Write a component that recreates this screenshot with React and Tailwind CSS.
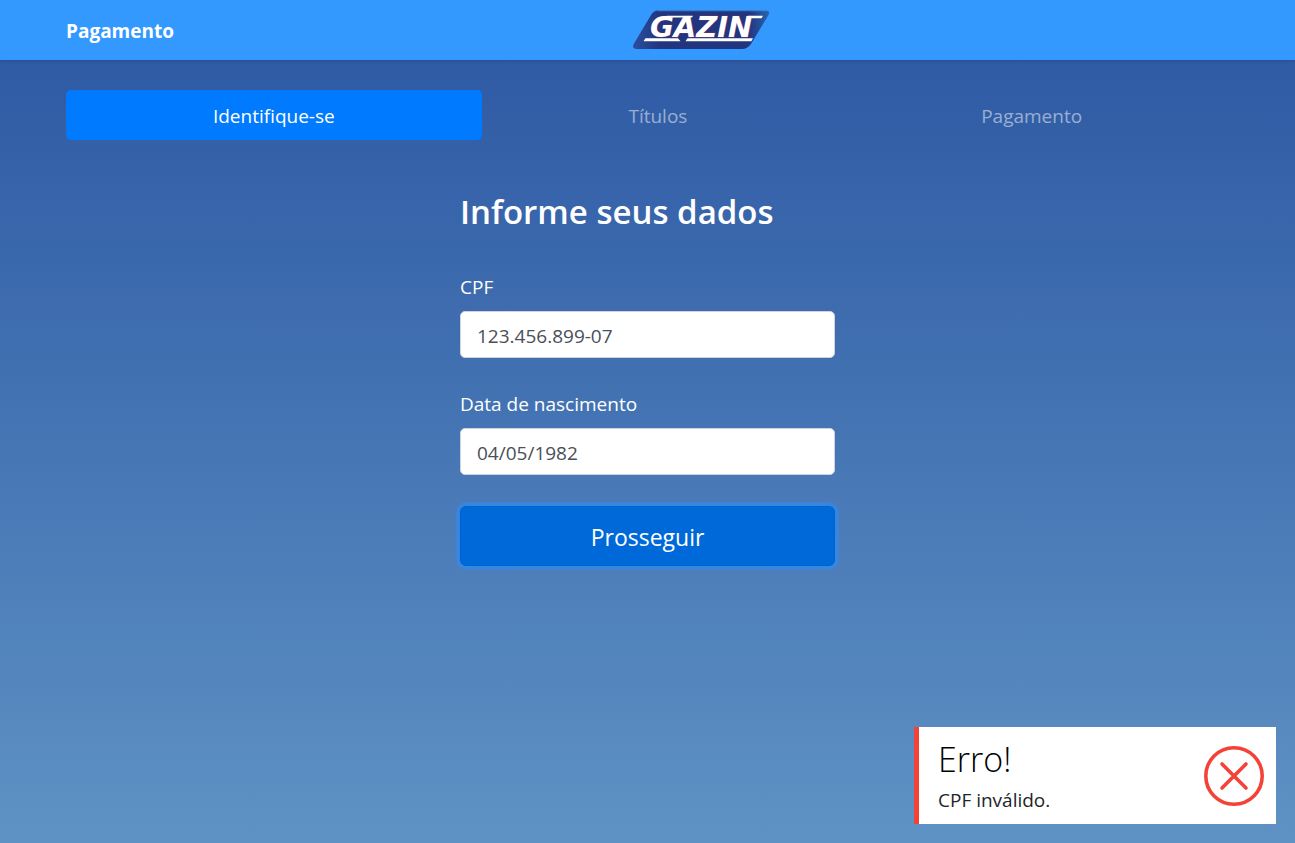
const steps = [
  { label: "Identifique-se", active: true },
  { label: "Títulos", active: false },
  { label: "Pagamento", active: false },
];

function Logo({ className }) {
  return (
    <svg viewBox="0 0 138 40" className={className} role="img" aria-label="Gazin">
      <defs>
        <linearGradient id="plate" x1="0" y1="0" x2="1" y2="0">
          <stop offset="0" stopColor="#2a4f9e" />
          <stop offset="0.2" stopColor="#22357f" />
          <stop offset="0.85" stopColor="#22357f" />
          <stop offset="1" stopColor="#2a64b0" />
        </linearGradient>
      </defs>
      <path d="M25 0.500H132Q138 0.500 135.500 5L118 34Q114.500 39 109 39H4Q-2 39 1 33.500L18 5Q20.500 0.500 25 0.500Z" fill="url(#plate)" />
      <path d="M25 0.800H133" stroke="#3c93c9" strokeWidth="0.8" />
      <text x="17" y="27" fontFamily="DejaVu Sans" fontWeight="700" fontStyle="italic" fontSize="29" fill="#fff" stroke="#a83a5c" strokeWidth="0.5" paintOrder="stroke">GAZIN</text>
      <path d="M34 5.800H60L59 7.600H31ZM115 5.800H130L128.500 8.300H114Z" fill="#fff" />
      <path d="M12.500 28.300H45L47.500 31.200H10.500ZM54.500 28.300H120L118.300 31.200H52.500Z" fill="#fff" />
    </svg>
  );
}

function Field({ id, label, value }) {
  return (
    <div className="flex flex-col gap-[9px]">
      <label htmlFor={id} className="text-[19px] leading-[30px] text-white">{label}</label>
      <input
        id={id}
        defaultValue={value}
        className="h-[47px] w-full rounded-[5px] border border-[#ced4da] bg-white px-4 pt-[2px] text-[19px] text-[#495057]"
      />
    </div>
  );
}

export default function App() {
  return (
    <div className="flex min-h-screen flex-col bg-linear-to-b from-[#2c56a2] to-[#5f92c4] font-['Open_Sans',sans-serif]">
      <header className="bg-[#3399ff] shadow-sm">
        <div className="mx-auto flex h-[60px] w-full max-w-[1163px] items-center">
          <h1 className="pt-[2px] text-[19px] font-bold text-white">Pagamento</h1>
          <Logo className="mx-auto h-10 w-[138px]" />
        </div>
      </header>
      <main className="mx-auto w-full max-w-[1163px] pt-[30px]">
        <nav className="flex text-[19px] leading-[30px]">
          {steps.map((s) => (
            <a
              key={s.label}
              href="#"
              className={
                s.active
                  ? "flex-auto rounded-[5px] bg-[#007bff] px-5 pt-[11px] pb-[9px] text-center text-white"
                  : "flex-auto rounded-[5px] px-5 pt-[11px] pb-[9px] text-center text-white/50"
              }
            >
              {s.label}
            </a>
          ))}
        </nav>
        <form className="mx-auto mt-12 flex max-w-[375px] flex-col">
          <h2 className="text-[33px] leading-[48px] font-semibold text-white">Informe seus dados</h2>
          <div className="mt-9 flex flex-col gap-[31px]">
            <Field id="cpf" label="CPF" value="123.456.899-07" />
            <Field id="nascimento" label="Data de nascimento" value="04/05/1982" />
            <button
              type="button"
              className="h-[60px] rounded-md border border-[#0062cc] bg-[#0069d9] pt-[2px] text-[23px] text-white ring-4 ring-[#268fff]/50"
            >
              Prosseguir
            </button>
          </div>
        </form>
      </main>
      <div role="alert" className="fixed right-[19px] bottom-[19px] flex h-[97px] w-[362px] items-center justify-between border-l-[5px] border-[#f44336] bg-white pr-3 pl-[19px]">
        <div>
          <h3 className="text-[34px] leading-[44px] font-light text-black">Erro!</h3>
          <p className="pt-1 text-[19px] leading-[30px] text-[#212529]">CPF inválido.</p>
        </div>
        <svg viewBox="0 0 60 60" className="size-15" fill="none" stroke="#f44336" strokeWidth="3.600" strokeLinecap="round" aria-hidden="true">
          <circle cx="30" cy="30" r="28.200" />
          <path d="M18 18L42 42M42 18L18 42" />
        </svg>
      </div>
    </div>
  );
}
